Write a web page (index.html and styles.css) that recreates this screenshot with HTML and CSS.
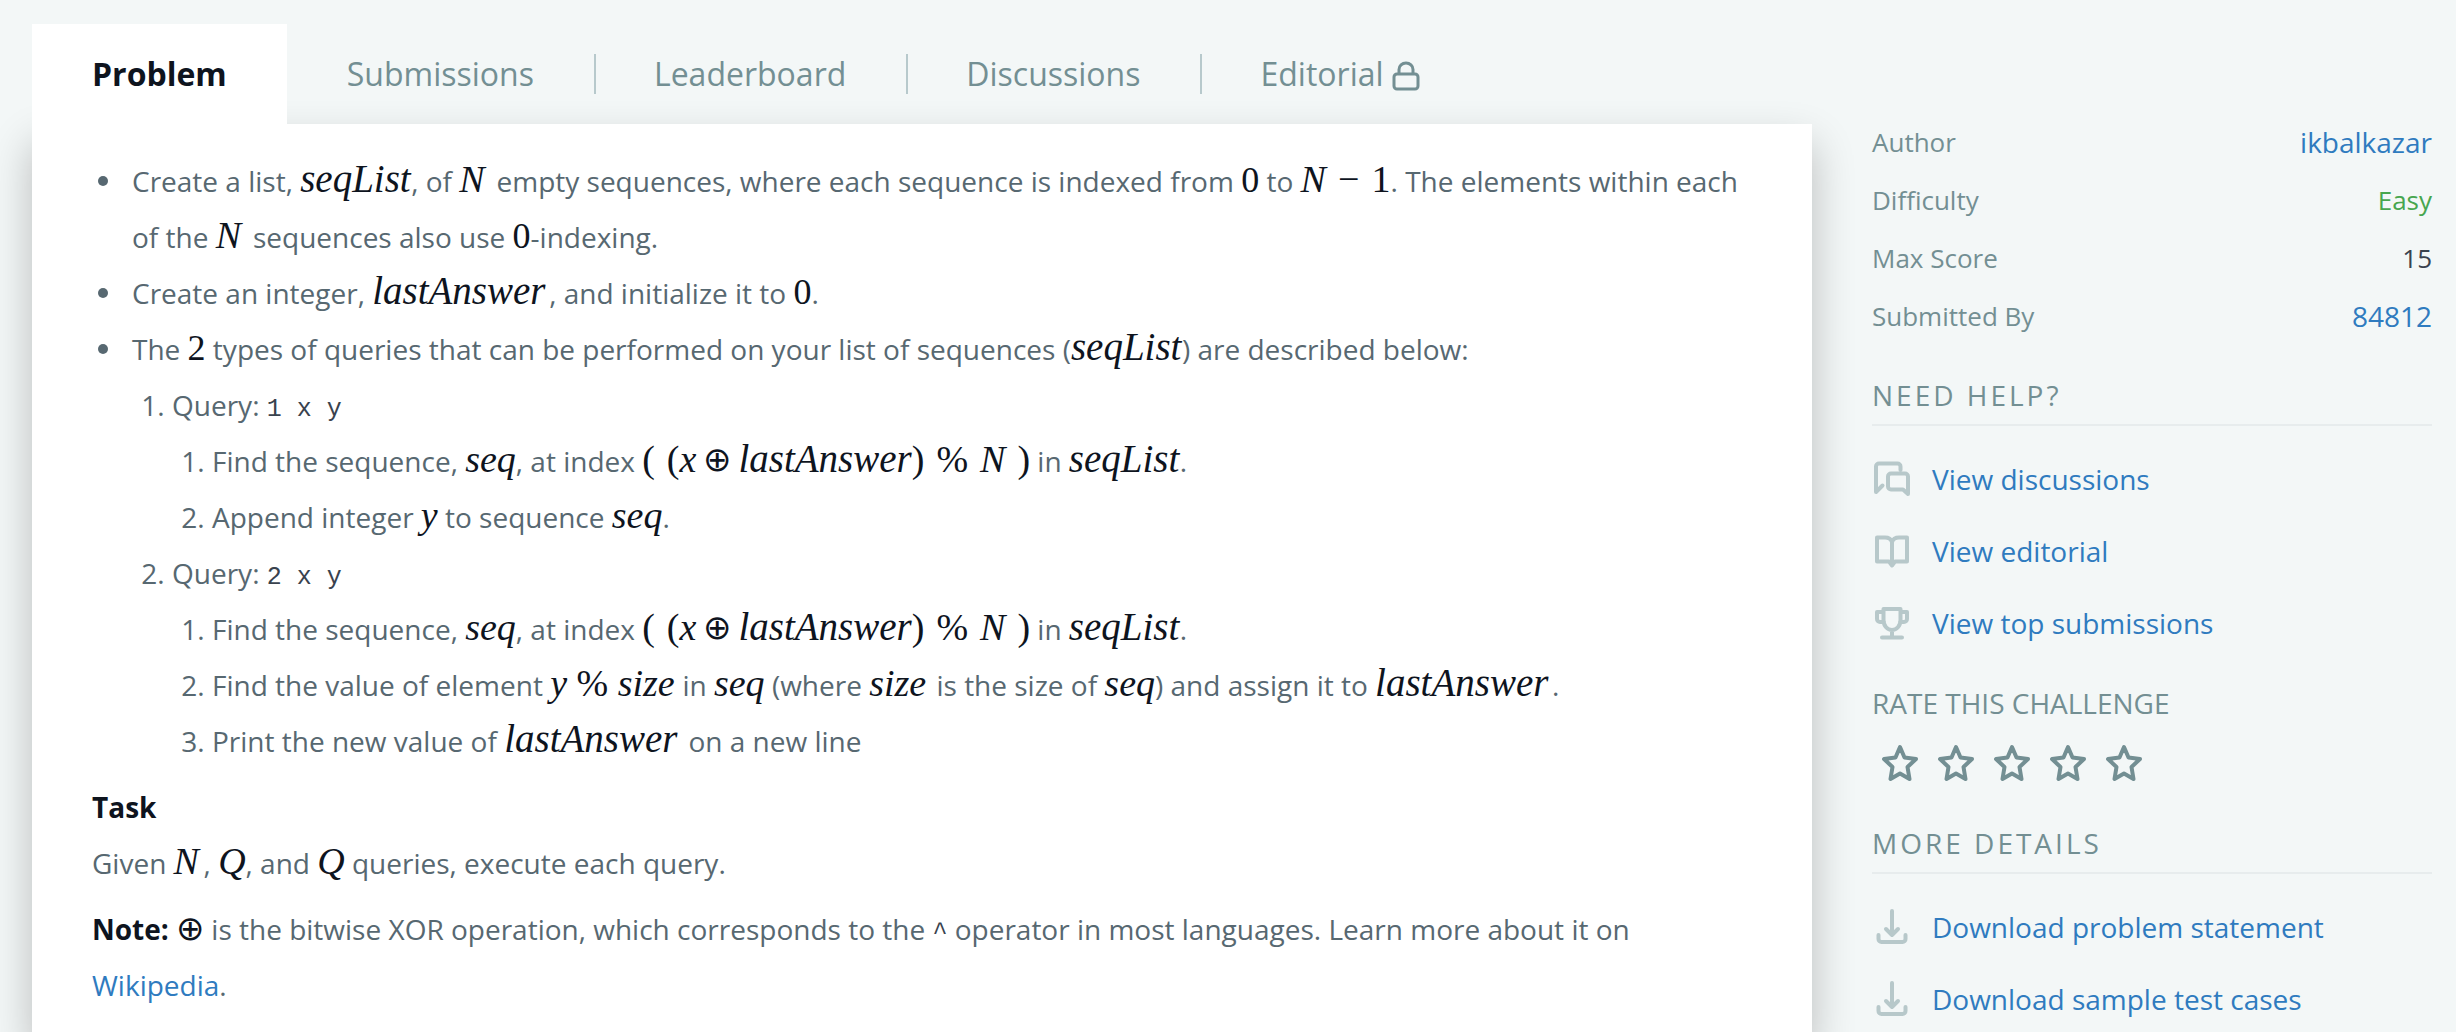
FILE: index.html
```html
<!DOCTYPE html>
<html lang="en">
<head>
<meta charset="utf-8">
<title>Dynamic Array</title>
<link rel="stylesheet" href="styles.css">
</head>
<body>
<div class="page">
  <main class="main">
    <nav class="tabs">
      <a class="tab tab-active" href="#problem">Problem</a>
      <a class="tab" href="#submissions">Submissions</a>
      <a class="tab" href="#leaderboard">Leaderboard</a>
      <a class="tab" href="#discussions">Discussions</a>
      <a class="tab" href="#editorial">Editorial
        <svg class="lock" viewBox="0 0 28 30"><rect x="2" y="13" width="24" height="15" rx="3"/><path d="M7 13V8.500a7 6.500 0 0 1 14 0V13"/></svg></a>
    </nav>
    <article class="card" id="problem">
      <ul>
        <li>Create a list, <i class="math w-list">seqList</i>, of <i class="math w-n">N</i> empty sequences, where each sequence is indexed from <span class="math digit">0</span> to <span class="math w-diff"><i>N</i><span>−</span><span>1</span></span>. The elements within each of the <i class="math w-n">N</i> sequences also use <span class="math digit">0</span>-indexing.</li>
        <li>Create an integer, <i class="math w-answer">lastAnswer</i>, and initialize it to <span class="math digit">0</span>.</li>
        <li>The <span class="math digit">2</span> types of queries that can be performed on your list of sequences (<i class="math w-list">seqList</i>) are described below:
          <ol>
            <li>Query: <code>1 x y</code>
              <ol>
                <li>Find the sequence, <i class="math w-seq">seq</i>, at index <span class="math expr"><span>(</span><span>(<i>x</i></span><span class="xor">⊕</span><span><i class="w-answer">lastAnswer</i>)</span><span>%</span><i>N</i><span>)</span></span> in <i class="math w-list">seqList</i>.</li>
                <li>Append integer <i class="math">y</i> to sequence <i class="math w-seq">seq</i>.</li>
              </ol>
            </li>
            <li>Query: <code>2 x y</code>
              <ol>
                <li>Find the sequence, <i class="math w-seq">seq</i>, at index <span class="math expr"><span>(</span><span>(<i>x</i></span><span class="xor">⊕</span><span><i class="w-answer">lastAnswer</i>)</span><span>%</span><i>N</i><span>)</span></span> in <i class="math w-list">seqList</i>.</li>
                <li>Find the value of element <span class="math w-mod"><i>y</i> % <i>size</i></span> in <i class="math w-seq">seq</i> (where <i class="math w-size">size</i> is the size of <i class="math w-seq">seq</i>) and assign it to <i class="math w-answer">lastAnswer</i>.</li>
                <li>Print the new value of <i class="math w-answer">lastAnswer</i> on a new line</li>
              </ol>
            </li>
          </ol>
        </li>
      </ul>
      <p><strong>Task</strong><br>Given <i class="math w-n">N</i>, <i class="math">Q</i>, and <i class="math">Q</i> queries, execute each query.</p>
      <p><strong>Note:</strong> <span class="math xor">⊕</span> is the bitwise XOR operation, which corresponds to the <code>^</code> operator in most languages. Learn more about it on <a class="link" href="#wikipedia">Wikipedia</a>.</p>
    </article>
  </main>
  <aside class="side">
    <dl class="facts">
      <div class="fact"><dt>Author</dt><dd><a class="link" href="#author">ikbalkazar</a></dd></div>
      <div class="fact"><dt>Difficulty</dt><dd class="easy">Easy</dd></div>
      <div class="fact"><dt>Max Score</dt><dd>15</dd></div>
      <div class="fact"><dt>Submitted By</dt><dd><a class="link" href="#submitters">84812</a></dd></div>
    </dl>
    <h2 class="heading ruled">NEED HELP?</h2>
    <ul class="actions">
      <li><a class="link" href="#discussions"><svg class="icon" viewBox="0 0 36 36"><path d="M26.500 9V5.500a3 3 0 0 0-3-3H5a3 3 0 0 0-3 3V31l6.500-6.500"/><path d="M17 12.500h14a3 3 0 0 1 3 3V33l-5-4.500H17a3 3 0 0 1-3-3v-10a3 3 0 0 1 3-3z"/></svg>View discussions</a></li>
      <li><a class="link" href="#editorial"><svg class="icon" viewBox="0 0 36 36"><path d="M18 9c-1-3-3-4.500-7-4.500H3v24h12l3 4 3-4h12v-24h-8c-4 0-6 1.500-7 4.500zM18 9v23"/></svg>View editorial</a></li>
      <li><a class="link" href="#top"><svg class="icon" viewBox="0 0 36 36"><path d="M9.500 4h17v11c0 6-4 10-8.500 10s-8.500-4-8.500-10zM9.500 7H3v7a3 3 0 0 0 3 3h4M26.500 7H33v7a3 3 0 0 1-3 3h-4M18 25v7M8 32.500h20"/></svg>View top submissions</a></li>
    </ul>
    <h2 class="heading rate-title">RATE THIS CHALLENGE</h2>
    <div class="stars">
      <button aria-label="1 star"><svg viewBox="0 0 38 38"><path d="M19 3l4.500 10.500 11.500 1.500-8.500 8 2 12-9.500-5.500-9.500 5.500 2-12-8.500-8 11.500-1.500z"/></svg></button>
      <button aria-label="2 stars"><svg viewBox="0 0 38 38"><path d="M19 3l4.500 10.500 11.500 1.500-8.500 8 2 12-9.500-5.500-9.500 5.500 2-12-8.500-8 11.500-1.500z"/></svg></button>
      <button aria-label="3 stars"><svg viewBox="0 0 38 38"><path d="M19 3l4.500 10.500 11.500 1.500-8.500 8 2 12-9.500-5.500-9.500 5.500 2-12-8.500-8 11.500-1.500z"/></svg></button>
      <button aria-label="4 stars"><svg viewBox="0 0 38 38"><path d="M19 3l4.500 10.500 11.500 1.500-8.500 8 2 12-9.500-5.500-9.500 5.500 2-12-8.500-8 11.500-1.500z"/></svg></button>
      <button aria-label="5 stars"><svg viewBox="0 0 38 38"><path d="M19 3l4.500 10.500 11.500 1.500-8.500 8 2 12-9.500-5.500-9.500 5.500 2-12-8.500-8 11.500-1.500z"/></svg></button>
    </div>
    <h2 class="heading ruled">MORE DETAILS</h2>
    <ul class="actions">
      <li><a class="link" href="#statement"><svg class="icon" viewBox="0 0 36 36"><path d="M18 2v24M12 20l6 6 6-6M4.500 26v4a3 3 0 0 0 3 3h21a3 3 0 0 0 3-3v-4"/></svg>Download problem statement</a></li>
      <li><a class="link" href="#cases"><svg class="icon" viewBox="0 0 36 36"><path d="M18 2v24M12 20l6 6 6-6M4.500 26v4a3 3 0 0 0 3 3h21a3 3 0 0 0 3-3v-4"/></svg>Download sample test cases</a></li>
    </ul>
  </aside>
</div>
</body>
</html>
```

FILE: styles.css
```css
* { box-sizing: border-box; }
html { background: #f3f7f7; }
body {
  margin: 0;
  font-family: "Open Sans", sans-serif;
  font-size: 28px;
  line-height: 56px;
  color: #576871;
}
a { text-decoration: none; }
ul, ol, dl, p, h2, dd { margin: 0; }
.link { color: #2f7bbf; }

.page {
  display: grid;
  grid-template-columns: minmax(0, 1fr) 560px;
  column-gap: 60px;
  min-height: 100vh;
  padding: 24px 24px 0 32px;
}
.main { display: flex; flex-direction: column; }

/* Tabs */
.tabs { display: flex; align-items: center; }
.tab {
  padding: 0 60px;
  font-size: 32px;
  line-height: 40px;
  color: #738f93;
}
.tab + .tab + .tab {
  padding-left: 58px;
  border-left: 2px solid #b7c9cc;
}
.tab-active {
  position: relative;
  z-index: 1;
  background: #fff;
  color: #0e141e;
  font-weight: 700;
  line-height: 100px;
}
.lock {
  width: 28px;
  height: 30px;
  vertical-align: -5px;
  fill: none;
  stroke: #738f93;
  stroke-width: 3;
}

/* Problem statement */
.card {
  flex: 1;
  padding: 29px 60px 0;
  background: #fff;
  box-shadow: 0 20px 40px rgba(0, 0, 0, .24);
}
.card ul, .card ol { padding-left: 40px; }
.card ul { list-style: none; }
.card ul > li::before {
  content: "";
  display: inline-block;
  width: 10px;
  height: 10px;
  margin: 0 24px 0 -34px;
  border-radius: 50%;
  background: #576871;
  vertical-align: 6px;
}
.card p { margin-top: 10px; }
strong { color: #0e141e; }
code {
  font-family: "Liberation Mono", monospace;
  font-size: 25px;
  line-height: 1;
  color: #39424e;
}
.math {
  display: inline-block;
  font-family: "Liberation Serif", serif;
  font-size: 38px;
  line-height: 38px;
  color: #0e141e;
  white-space: nowrap;
}
.digit { font-size: 36px; }
.w-list, .w-answer { font-size: 39px; }
.w-list { min-width: 111px; }
.w-answer { min-width: 177px; }
.w-n { min-width: 30px; }
.w-seq { min-width: 50px; }
.w-size { min-width: 60px; }
.w-diff {
  display: inline-flex;
  justify-content: space-between;
  min-width: 90px;
}
.w-mod { min-width: 125px; }
.expr { display: inline-flex; gap: 12px; }
.xor {
  font-family: "DejaVu Sans", sans-serif;
  font-size: 34px;
  font-weight: 200;
}
.expr .xor { margin: 0 -5px; }

/* Sidebar */
.side { padding-top: 90px; }
.fact {
  display: flex;
  justify-content: space-between;
  height: 58px;
  font-size: 26px;
}
dt { color: #738f93; }
dd { color: #39424e; }
dd .link { font-size: 28px; }
dd.easy { color: #47a64f; }
.heading {
  font-size: 28px;
  font-weight: 400;
  line-height: 38px;
  color: #738f93;
}
.ruled {
  height: 50px;
  margin-top: 30px;
  border-bottom: 2px solid #e7eced;
  letter-spacing: 3px;
}
.actions { list-style: none; padding: 17px 0 0; }
.actions .link {
  display: flex;
  align-items: center;
  gap: 22px;
  height: 72px;
  padding-left: 2px;
}
.icon {
  width: 36px;
  height: 36px;
  fill: none;
  stroke: #b7c8ca;
  stroke-width: 4;
  stroke-linecap: round;
  stroke-linejoin: round;
}
.rate-title { margin-top: 25px; }
.stars { display: flex; height: 72px; padding: 22px 0 0 9px; gap: 18px; }
.stars button {
  width: 38px;
  height: 38px;
  padding: 0;
  border: 0;
  background: none;
}
.stars svg {
  display: block;
  fill: none;
  stroke: #738f93;
  stroke-width: 4;
  stroke-linejoin: round;
}
```
